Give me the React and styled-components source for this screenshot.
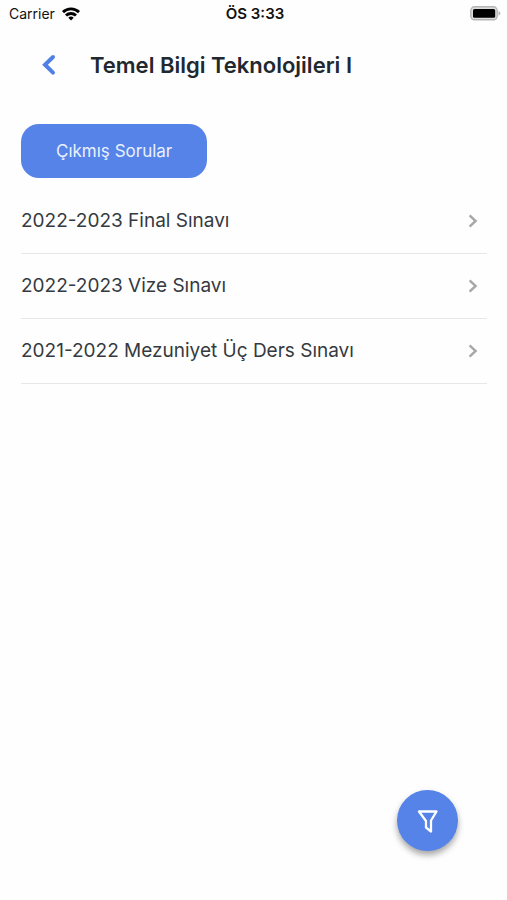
import { useState } from "react";
import styled, { createGlobalStyle } from "styled-components";

const GlobalStyle = createGlobalStyle`
  * {
    box-sizing: border-box;
  }

  body {
    margin: 0;
    background: #fefefe;
    color: #343a40;
    font-family: Inter, "Liberation Sans", sans-serif;
  }
`;

const StyledScreen = styled.div`
  min-height: 100vh;
`;

const StyledStatusBar = styled.div`
  display: grid;
  grid-template-columns: 1fr auto 1fr;
  align-items: center;
  height: 28px;
  padding: 0 6px 0 9px;
  color: #111;
  font-size: 14px;
  line-height: 20px;
`;

const StyledCarrier = styled.div`
  display: flex;
  align-items: center;
  gap: 7px;
`;

const StyledTime = styled.time`
  font-size: 15px;
  font-weight: 600;
`;

const StyledBattery = styled.svg`
  justify-self: end;
`;

const StyledHeader = styled.header`
  display: flex;
  align-items: center;
  gap: 24px;
  height: 74px;
  padding: 0 32px;
`;

const StyledBackButton = styled.button`
  display: flex;
  align-items: center;
  justify-content: center;
  width: 34px;
  height: 40px;
  padding: 0;
  border: 0;
  background: none;
  cursor: pointer;
`;

const StyledTitle = styled.h1`
  margin: 0;
  color: #212830;
  font-size: 22px;
  font-weight: 600;
  line-height: 28px;
`;

const StyledMain = styled.main`
  padding: 22px 20px 0 21px;
`;

const StyledTab = styled.button`
  height: 54px;
  padding: 0 35px;
  border: 0;
  border-radius: 18px;
  background: #5583e8;
  color: #e9f0fe;
  font-family: inherit;
  font-size: 17px;
  line-height: 24px;
  cursor: pointer;
`;

const StyledList = styled.ul`
  margin: 11px 0 0;
  padding: 0;
  list-style: none;
`;

const StyledItem = styled.li`
  border-bottom: 1px solid #e6e7e8;
`;

const StyledLink = styled.a`
  display: flex;
  align-items: center;
  justify-content: space-between;
  height: 64px;
  padding-right: 8px;
  color: inherit;
  font-size: 19px;
  line-height: 28px;
  text-decoration: none;
`;

const StyledFilterButton = styled.button`
  position: fixed;
  right: 49px;
  bottom: 49px;
  display: flex;
  align-items: center;
  justify-content: center;
  width: 61px;
  height: 61px;
  padding: 0;
  border: 0;
  border-radius: 50%;
  background: #5583e8;
  box-shadow: 0 4px 6px rgba(0, 0, 0, 0.35);
  cursor: pointer;
`;

const exams = [
  { id: 1, name: "2022-2023 Final Sınavı" },
  { id: 2, name: "2022-2023 Vize Sınavı" },
  { id: 3, name: "2021-2022 Mezuniyet Üç Ders Sınavı" },
];

function WifiIcon() {
  return (
    <svg width="18" height="14" viewBox="0 0 18 14" aria-hidden="true">
      <g fill="none" stroke="#000" strokeWidth="2.9">
        <path d="M1 5.1a11.6 11.6 0 0 1 16 0" />
        <path d="M4 8.5a7.2 7.2 0 0 1 10 0" />
      </g>
      <path d="M6.3 10.7a4 4 0 0 1 5.4 0L9 13.5z" />
    </svg>
  );
}

function BatteryIcon() {
  return (
    <StyledBattery width="31" height="16" viewBox="0 0 31 16" aria-hidden="true">
      <rect x="0.8" y="0.8" width="26.4" height="13" rx="3.8" fill="#ddd" stroke="#b5b5b5" strokeWidth="1.4" />
      <rect x="3" y="3" width="22.2" height="8.8" rx="1.6" />
      <path d="M28.5 5c2.4.8 2.4 3.8 0 4.6z" fill="#b5b5b5" />
    </StyledBattery>
  );
}

function ExamRow({ name }) {
  return (
    <StyledItem>
      <StyledLink href="#">
        {name}
        <svg width="12" height="14" viewBox="0 0 12 14" aria-hidden="true">
          <path d="M2.6 1.4L8.6 7L2.6 12.6" fill="none" stroke="#a5a7a8" strokeWidth="2.4" />
        </svg>
      </StyledLink>
    </StyledItem>
  );
}

function App() {
  const [selected, setSelected] = useState(true);

  return (
    <StyledScreen>
      <GlobalStyle />
      <StyledStatusBar>
        <StyledCarrier>
          Carrier
          <WifiIcon />
        </StyledCarrier>
        <StyledTime>ÖS 3:33</StyledTime>
        <BatteryIcon />
      </StyledStatusBar>
      <StyledHeader>
        <StyledBackButton type="button" aria-label="Geri">
          <svg width="16" height="22" viewBox="0 0 16 22" aria-hidden="true">
            <path
              d="M12 3L4 10.8l8 7.8"
              fill="none"
              stroke="#5080e6"
              strokeWidth="4"
              strokeLinecap="round"
            />
          </svg>
        </StyledBackButton>
        <StyledTitle>Temel Bilgi Teknolojileri I</StyledTitle>
      </StyledHeader>
      <StyledMain>
        <StyledTab
          type="button"
          aria-pressed={selected}
          onClick={() => {
            setSelected(!selected);
          }}
        >
          Çıkmış Sorular
        </StyledTab>
        <StyledList>
          {exams.map((exam) => (
            <ExamRow key={exam.id} name={exam.name} />
          ))}
        </StyledList>
      </StyledMain>
      <StyledFilterButton type="button" aria-label="Filtrele">
        <svg width="22" height="24" viewBox="0 0 22 24" aria-hidden="true">
          <path
            d="M2 2.5h17.500l-5.500 9v11l-5-4v-6.500z"
            fill="none"
            stroke="#fff"
            strokeWidth="2.3"
            strokeLinejoin="round"
          />
        </svg>
      </StyledFilterButton>
    </StyledScreen>
  );
}

export default App;
